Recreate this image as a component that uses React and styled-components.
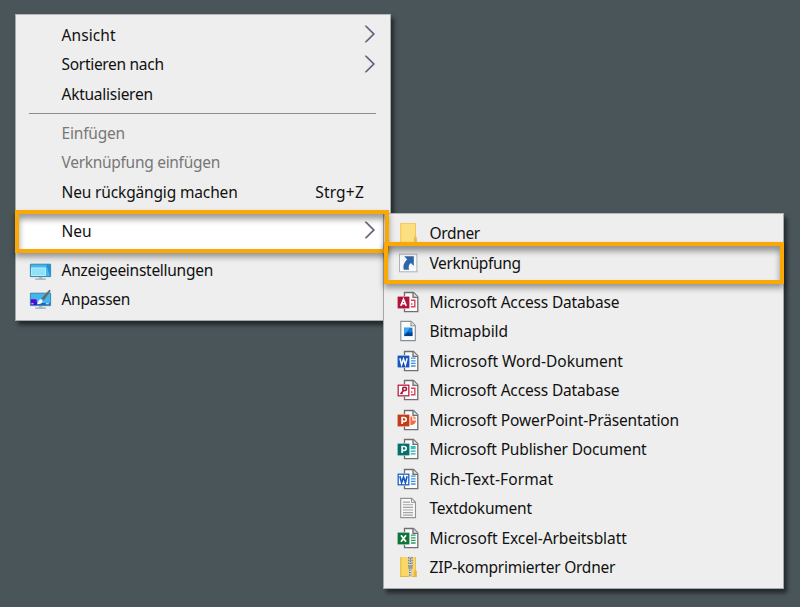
import React from "react";
import styled, { createGlobalStyle } from "styled-components";

const GlobalStyle = createGlobalStyle`
  * { box-sizing: border-box; }
  body { margin: 0; background: #4a555a; }
`;

const Desktop = styled.main`
  height: 607px;
  padding: 14px 0 0 15px;
  overflow: hidden;
  background: #4a555a;
  font-family: "Noto Sans", "Open Sans", sans-serif;
  font-size: 15.5px;
  color: #111111;
`;

const Menu = styled.ul`
  position: relative;
  list-style: none;
  margin: 0;
  width: ${(p) => p.$width}px;
  padding: 5px 0 5.5px;
  background: #eeeeee;
  border: 1px solid #a6a9aa;
  border-top-color: #b4b7b8;
  box-shadow: 3px 4px 4px rgba(0, 0, 0, 0.52);
`;

const Submenu = styled(Menu)`
  position: absolute;
  left: 383px;
  top: 212.5px;
`;

const Row = styled.li`
  position: relative;
  display: grid;
  grid-template-columns: 24px 1fr auto;
  column-gap: 10px;
  align-items: center;
  height: 29.5px;
  padding: 0 ${(p) => (p.$shortcut ? 25.5 : 13.5)}px 0 11.5px;
  color: ${(p) => (p.$disabled ? "#777777" : "inherit")};
`;

const Label = styled.span`
  grid-column: 2;
  white-space: nowrap;
  letter-spacing: ${(p) => p.$track || 0}px;
  line-height: 24px;
`;

const Shortcut = styled.span`
  letter-spacing: 0.2px;
  line-height: 24px;
`;

const Separator = styled.li`
  height: 9.5px;
  margin: 0 13.5px 0 13px;
  padding-top: 4px;
  &::before {
    content: "";
    display: block;
    height: 1px;
    background: ${(p) => (p.$hidden ? "transparent" : "#8a8c8c")};
  }
`;

const ActiveRow = styled(Row)`
  &::before {
    content: "";
    position: absolute;
    inset: -3px 5px -4px 1px;
    background: #ffffff;
  }
  & > * { position: relative; }
`;

const Frame = styled.div`
  position: absolute;
  left: ${(p) => p.$x}px;
  top: ${(p) => p.$y}px;
  width: ${(p) => p.$w}px;
  height: ${(p) => p.$h}px;
  border: 4px solid #faa806;
  box-shadow: 0 4px 6px rgba(0, 0, 0, 0.38), inset 0 5px 6px rgba(0, 0, 0, 0.4);
`;

const Glyph = styled.svg`
  display: block;
  width: 24px;
  height: 24px;
  grid-column: 1;
`;

const Arrow = styled.svg`
  display: block;
  width: 12px;
  height: 20px;
  margin-top: -1px;
`;

const Chevron = () => (
  <Arrow viewBox="0 0 12 20" fill="none">
    <path d="M.9 1.8 9.2 10 .9 18.2" stroke="#e09a62" strokeWidth="1.1" />
    <path d="M2.1 1.8 10.4 10 2.1 18.2" stroke="#5e8fd8" strokeWidth="1.1" />
    <path d="M1.5 1.8 9.8 10 1.5 18.2" stroke="#403560" strokeWidth=".9" />
  </Arrow>
);

const Page = ({ children }) => (
  <>
    <path d="M8.5 2.5h9l4.3 4.3v14.9H8.5z" fill="#fafafa" stroke="#6f6f6f" strokeWidth="1.3" />
    <path d="M17 2.5v4.8h4.8" fill="#ddd" stroke="#6f6f6f" strokeWidth="1.3" />
    <path d="M7.8 6.2h5.9v12.6H7.8z" fill="#fafafa" />
    {children}
  </>
);

const Badge = ({ color, outline }) => (
  <rect x={outline ? 2.2 : 1.6} y={outline ? 7.2 : 6.6} width={outline ? 10.6 : 11.8} height={outline ? 10.6 : 11.8}
    fill={outline ? "#fff" : color} stroke={outline ? color : "none"} strokeWidth="1.3" />
);

const AccessMark = () => (
  <path d="M15 10.3h3.8v6.4H15M15 14h1.4" fill="none" stroke="#d8435f" strokeWidth="1.4" />
);

const TextLines = ({ color }) => (
  <path d="M15 9.2h4.6M15 11.8h4.6M15 14.4h4.6M15 17h4.6" stroke={color} strokeWidth="1.3" />
);

const W = "M3.9 9.2 5.6 15.7 7.5 10l1.9 5.7 1.7-6.5";
const P = "M6.1 16V9.5h1.9q2.2 0 2.2 2T8 13.4H6.1";

const icons = {
  folder: (
    <>
      <path d="M4.3 2h15v13l1.4 1.5V22H4.3z" fill="#fbdf80" />
      <path d="M4.3 2h1v20h-1zM4.3 2h15v.8h-15z" fill="#edc75a" />
      <path d="M19 2h.8v13l1 1.5V22h-3v-5l1.2-2z" fill="#e8bf4c" />
    </>
  ),
  shortcut: (
    <>
      <rect x="3.5" y="3.2" width="17.4" height="17.6" fill="#f7f8fa" stroke="#aeb1b5" />
      <path d="M8.2 5.3h9.6v9.6l-2.9-2.8c-2 1.6-2.7 3.6-1.8 6.7H7.8c-1-4.3.3-7.2 3.4-10.2z" fill="#2f65a8" />
    </>
  ),
  access: (
    <Page>
      <Badge color="#b3123a" />
      <AccessMark />
      <path d="m4.8 15.9 2.7-6.8 2.7 6.8M5.8 13.7h3.4" fill="none" stroke="#fff" strokeWidth="1.6" />
    </Page>
  ),
  accessKey: (
    <Page>
      <Badge color="#bd2045" outline />
      <AccessMark />
      <path d="M4.5 15.9 7.5 12.5M5.6 14.7l1 .9" stroke="#a90f38" strokeWidth="1.5" />
      <ellipse cx="8.6" cy="10.9" rx="1.9" ry="1.6" fill="none" stroke="#a90f38" strokeWidth="1.5" />
    </Page>
  ),
  bitmap: (
    <>
      <path d="M4.8 2.4h10.4L19.3 6.5v15.1H4.8z" fill="#f8fafc" stroke="#8b8e91" strokeWidth="1.1" />
      <path d="M15 2.4v4.3h4.3" fill="#e4e4e4" stroke="#8b8e91" strokeWidth="1.1" />
      <rect x="8" y="8.7" width="8.4" height="8.4" fill="#1478d4" />
      <path d="M8 8.7h6l-3 4-3 2z" fill="#38a8ee" />
      <path d="m8 17.1 4.3-4.4 1.9 1.5 2.2-1.6v4.5z" fill="#073c88" />
    </>
  ),
  word: (
    <Page>
      <Badge color="#1755bd" />
      <TextLines color="#3f91dd" />
      <path d={W} fill="none" stroke="#fff" strokeWidth="1.5" />
    </Page>
  ),
  rtf: (
    <Page>
      <Badge color="#1a60c9" outline />
      <TextLines color="#3f91dd" />
      <path d={W} fill="none" stroke="#1556be" strokeWidth="1.6" />
    </Page>
  ),
  powerpoint: (
    <Page>
      <path d="M14.4 8.8a5 5 0 0 1 1.8-.4v4.2h3.9A5 5 0 0 1 14.4 17z" fill="#ee6c42" />
      <path d="M17.2 7.8a4 4 0 0 1 3.1 3.5h-3.1z" fill="#f6a184" />
      <Badge color="#c63b17" />
      <path d={P} fill="none" stroke="#fff" strokeWidth="1.6" />
    </Page>
  ),
  publisher: (
    <Page>
      <path d="M14.7 9h4.9v3.2h-4.9z" fill="#35bfc4" />
      <path d="M14.7 14.2h4.9M14.7 16.8h4.9" stroke="#2da6a8" strokeWidth="1.3" />
      <Badge color="#05706b" />
      <path d={P} fill="none" stroke="#fff" strokeWidth="1.6" />
    </Page>
  ),
  text: (
    <>
      <path d="M4.7 2.4h11l3.8 3.8v15.4H4.7z" fill="#f7f7f7" stroke="#929292" strokeWidth="1.1" />
      <path d="M15.5 2.4v4h4" fill="none" stroke="#929292" />
      <path d="M7 6.1h7M7 8.8h10M7 11.4h10M7 14h10M7 16.6h10M7 19.1h10" stroke="#a5a5a5" strokeWidth="1.1" />
    </>
  ),
  excel: (
    <Page>
      <TextLines color="#2a9b61" />
      <Badge color="#0e7539" />
      <path d="m5 9.2 5 6.6M10 9.2l-5 6.6" stroke="#fff" strokeWidth="1.7" />
    </Page>
  ),
  zip: (
    <>
      <path d="M4.3 2h15v13l1.4 1.5V22H4.3z" fill="#f9d868" />
      <path d="M4.3 2h1v20h-1zM4.3 21h16.4v1H4.3zM19 2h.8v13l1 1.5V22h-3v-5l1.2-2z" fill="#e5b83d" />
      <path d="M12 1.5h4.8V12l-.8 1v9h-3.2v-9l-.8-1z" fill="#d4d4ce" />
      <path d="M12.8 2v9M16 2v9" stroke="#696b6d" strokeWidth="1.1" strokeDasharray="1.6 1.1" />
      <path d="M12.2 10h4.4v3.8h-4.4z" fill="#999b99" />
      <path d="M14.4 3v6M13 15h2.8M13 17.5h2.8M13 20h2.8" stroke="#666" strokeWidth="1" strokeDasharray="1.5 1" />
    </>
  ),
  monitor: (
    <>
      <path d="M2.4 6.2h20.2v12.4H2.4z" fill="#42b6ef" stroke="#347ca7" strokeWidth=".9" />
      <path d="M3.5 9.9h14v7.6h-14z" fill="#91e1fb" stroke="#c7f4ff" strokeWidth=".8" />
      <path d="m18 6.6 4 0v11.5z" fill="#1696df" />
      <path d="M11 18.9h3.3v1.7H11z" fill="#a7b8c0" />
      <path d="M7.3 21.1h10.5" stroke="#8a9da8" strokeWidth="1.1" />
    </>
  ),
  personalize: (
    <>
      <path d="M2.4 6.2h20.2v12.4H2.4z" fill="#42b6ef" stroke="#347ca7" strokeWidth=".9" />
      <path d="M2.9 12.2h5.5l1 5.9H2.9z" fill="#5309d8" />
      <path d="M10 16h11.8v2H10z" fill="#1b67b7" />
      <path d="M3.4 16.7h2M17.8 16.7h3" stroke="#eaf6ff" strokeWidth="1.1" />
      <path d="M9 16.4c1.5-.5 1.2-3.6 3.7-4.4l2 1.7c-.5 3-3 4.1-5.7 2.7z" fill="#f4f5f5" />
      <path d="m13.2 11.5 8.2-8.7 1.4 1-7 9.4z" fill="#646b70" />
      <path d="M11 18.9h3.3v1.7H11z" fill="#a7b8c0" />
      <path d="M7.3 21.1h10.5" stroke="#8a9da8" strokeWidth="1.1" />
    </>
  ),
};

const Icon = ({ name }) => <Glyph viewBox="0 0 24 24">{icons[name]}</Glyph>;

const newItems = [
  ["access", "Microsoft Access Database", -0.16],
  ["bitmap", "Bitmapbild", -0.1],
  ["word", "Microsoft Word-Dokument", -0.02],
  ["accessKey", "Microsoft Access Database", -0.16],
  ["powerpoint", "Microsoft PowerPoint-Präsentation", -0.14],
  ["publisher", "Microsoft Publisher Document", -0.16],
  ["rtf", "Rich-Text-Format", 0.08],
  ["text", "Textdokument", -0.22],
  ["excel", "Microsoft Excel-Arbeitsblatt", -0.08],
  ["zip", "ZIP-komprimierter Ordner", -0.24],
];

export default function App() {
  return (
    <Desktop>
      <GlobalStyle />
      <Menu $width={375.5}>
        <Row><Label $track={0.1}>Ansicht</Label><Chevron /></Row>
        <Row><Label $track={-0.3}>Sortieren nach</Label><Chevron /></Row>
        <Row><Label $track={-0.26}>Aktualisieren</Label></Row>
        <Separator />
        <Row $disabled><Label $track={-0.18}>Einfügen</Label></Row>
        <Row $disabled><Label $track={-0.29}>Verknüpfung einfügen</Label></Row>
        <Row $shortcut><Label $track={-0.15}>Neu rückgängig machen</Label><Shortcut>Strg+Z</Shortcut></Row>
        <Separator $hidden />
        <ActiveRow><Label>Neu</Label><Chevron /></ActiveRow>
        <Separator $hidden />
        <Row><Icon name="monitor" /><Label $track={-0.27}>Anzeigeeinstellungen</Label></Row>
        <Row><Icon name="personalize" /><Label $track={-0.3}>Anpassen</Label></Row>
      </Menu>
      <Submenu $width={401}>
        <Row><Icon name="folder" /><Label $track={-0.35}>Ordner</Label></Row>
        <Row><Icon name="shortcut" /><Label $track={-0.37}>Verknüpfung</Label></Row>
        <Separator $hidden />
        {newItems.map(([icon, label, track], i) => (
          <Row key={i}><Icon name={icon} /><Label $track={track}>{label}</Label></Row>
        ))}
      </Submenu>
      <Frame $x={15} $y={210} $w={374} $h={42.5} />
      <Frame $x={384} $y={242} $w={400} $h={42} />
    </Desktop>
  );
}
